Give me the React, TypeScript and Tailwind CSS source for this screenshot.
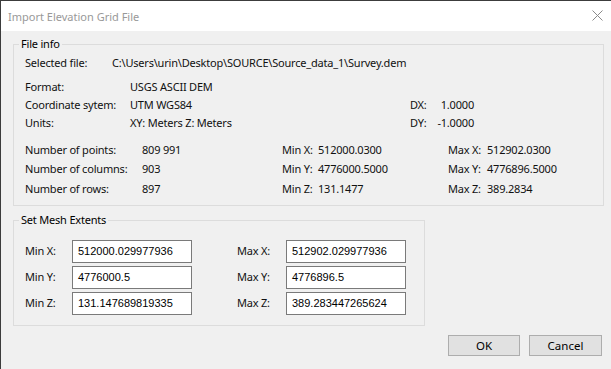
import React from 'react'

const font = { fontFamily: '"Segoe UI", "Noto Sans", "Liberation Sans", sans-serif' }

function GroupBox({ title, className = '', children }: { title: string; className?: string; children: React.ReactNode }) {
  return (
    <fieldset className={`border border-[#dcdcdc] ${className}`}>
      <legend className="ml-[5px] px-[2px] h-[16px] leading-[16px] text-black">{title}</legend>
      {children}
    </fieldset>
  )
}

function Field({ label, value, labelWidth }: { label: string; value: string; labelWidth: string }) {
  return (
    <div className="flex items-center h-[23px]">
      <span className={`${labelWidth} shrink-0`}>{label}</span>
      <div className="w-[120px] h-[23px] border border-[#7a7a7a] bg-white pl-[5px] pt-[3px] text-[11px] leading-[14px] tracking-normal text-black font-['Liberation_Sans',sans-serif]">
        {value}
      </div>
    </div>
  )
}

const stats = [
  ['Number of points:', '809 991', 'Min X:', '512000.0300', 'Max X:', '512902.0300'],
  ['Number of columns:', '903', 'Min Y:', '4776000.5000', 'Max Y:', '4776896.5000'],
  ['Number of rows:', '897', 'Min Z:', '131.1477', 'Max Z:', '389.2834'],
]

export default function App() {
  return (
    <div className="w-[611px] h-[369px] overflow-hidden bg-[#f0f0f0] border-l border-t border-[#3c3c3c] text-[11px] tracking-[-0.2px] text-[#111111]" style={font}>
      {/* title bar */}
      <div className="h-[30px] bg-white flex items-center justify-between pl-[7px] pr-[8px]">
        <span className="text-[11px] tracking-normal text-[#999999] leading-[16px] mt-[1px]">Import Elevation Grid File</span>
        <svg width="11" height="11" viewBox="0 0 11 11" className="mt-[-1px]">
          <path d="M0.5 0.5 L10.5 10.5 M10.5 0.5 L0.5 10.5" stroke="#8a8a8a" strokeWidth="1" />
        </svg>
      </div>

      <div className="pl-[12px] pt-[5px]">
        <GroupBox title="File info" className="w-[591px]">
          <div className="pl-[11px] pt-[2px] pb-[7px] leading-[18px]">
            <div className="flex h-[18px]">
              <span className="w-[87px]">Selected file:</span>
              <span>C:\Users\urin\Desktop\SOURCE\Source_data_1\Survey.dem</span>
            </div>

            <div className="mt-[6px]">
              <div className="flex h-[18px]">
                <span className="w-[105px]">Format:</span>
                <span>USGS ASCII DEM</span>
              </div>
              <div className="flex h-[18px]">
                <span className="w-[105px]">Coordinate sytem:</span>
                <span className="w-[280px]">UTM WGS84</span>
                <span className="w-[27px]">DX:</span>
                <span className="w-[37px] text-right">1.0000</span>
              </div>
              <div className="flex h-[17.5px]">
                <span className="w-[105px]">Units:</span>
                <span className="w-[280px]">XY: Meters Z: Meters</span>
                <span className="w-[27px]">DY:</span>
                <span className="w-[37px] text-right">-1.0000</span>
              </div>
            </div>

            <div className="mt-[8px] leading-[20px]">
              {stats.map(r => (
                <div key={r[0]} className="flex h-[19.5px]">
                  <span className="w-[117px]">{r[0]}</span>
                  <span className="w-[140px]">{r[1]}</span>
                  <span className="w-[36px]">{r[2]}</span>
                  <span className="w-[130px]">{r[3]}</span>
                  <span className="w-[39px]">{r[4]}</span>
                  <span>{r[5]}</span>
                </div>
              ))}
            </div>
          </div>
        </GroupBox>

        <GroupBox title="Set Mesh Extents" className="w-[412px] mt-[6px]">
          <div className="flex pl-[11px] pt-[12px] pb-[10px]">
            <div className="flex flex-col gap-[3px]">
              <Field label="Min X:" value="512000.029977936" labelWidth="w-[47px]" />
              <Field label="Min Y:" value="4776000.5" labelWidth="w-[47px]" />
              <Field label="Min Z:" value="131.147689819335" labelWidth="w-[47px]" />
            </div>
            <div className="flex flex-col gap-[3px] ml-[45px]">
              <Field label="Max X:" value="512902.029977936" labelWidth="w-[49px]" />
              <Field label="Max Y:" value="4776896.5" labelWidth="w-[49px]" />
              <Field label="Max Z:" value="389.283447265624" labelWidth="w-[49px]" />
            </div>
          </div>
        </GroupBox>

        <div className="flex justify-end gap-[9px] mt-[9px] pr-[9px]">
          <button className="w-[72px] h-[21px] bg-[#e1e1e1] border border-[#adadad] text-[11.5px] tracking-normal leading-[19px] text-black">OK</button>
          <button className="w-[73px] h-[21px] bg-[#e1e1e1] border border-[#adadad] text-[11.5px] tracking-normal leading-[19px] text-black">Cancel</button>
        </div>
      </div>
    </div>
  )
}
